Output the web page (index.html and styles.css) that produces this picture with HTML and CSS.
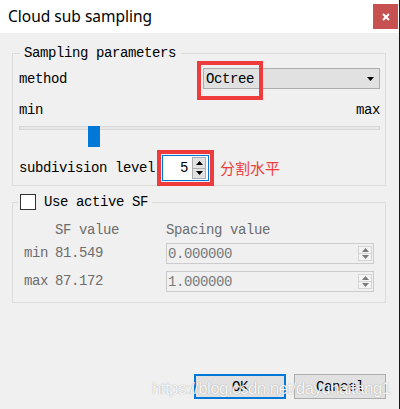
FILE: index.html
```html
<!DOCTYPE html>
<html>
<head>
<meta charset="utf-8">
<link rel="stylesheet" href="styles.css">
</head>
<body>
<div class="dialog">
  <header class="titlebar">
    <span class="title">Cloud sub sampling</span>
    <button class="close" aria-label="Close">
      <svg width="8" height="8" viewBox="0 0 8 8"><path d="M1 1 L7 7 M7 1 L1 7" stroke="#fff" stroke-width="2"/></svg>
    </button>
  </header>
  <main class="content">
    <fieldset class="group g1">
      <legend>Sampling parameters</legend>
      <div class="method-row">
        <span>method</span>
        <div class="combo">
          <span>Octree</span>
          <svg class="arrow" width="7" height="4" viewBox="0 0 7 4"><polygon points="0,0 7,0 3.5,4" fill="#000"/></svg>
          <span class="mark mark-combo"></span>
        </div>
      </div>
      <div class="range"><span>min</span><span>max</span></div>
      <div class="slider">
        <div class="groove"></div>
        <div class="thumb" style="left:69px"></div>
      </div>
      <div class="sub-row">
        <span>subdivision level</span>
        <div class="spin">
          <span class="val">5</span>
          <div class="spin-btns">
            <span><svg width="7" height="4" viewBox="0 0 7 4"><polygon points="0,4 7,4 3.5,0" fill="#000"/></svg></span>
            <span><svg width="7" height="4" viewBox="0 0 7 4"><polygon points="0,0 7,0 3.5,4" fill="#000"/></svg></span>
          </div>
          <span class="mark mark-spin"></span>
        </div>
        <span class="note">分割水平</span>
      </div>
    </fieldset>

    <fieldset class="group g2">
      <legend><span class="check"></span><span>Use active SF</span></legend>
      <div class="sf-grid">
        <span></span>
        <span class="head">SF value</span>
        <span class="head">Spacing value</span>

        <span class="lbl">min</span>
        <span class="lbl">81.549</span>
        <div class="dspin">
          <span>0.000000</span>
          <div class="dspin-btns">
            <span><svg width="7" height="4" viewBox="0 0 7 4"><polygon points="0,4 7,4 3.5,0" fill="#7a7a7a"/></svg></span>
            <span><svg width="7" height="4" viewBox="0 0 7 4"><polygon points="0,0 7,0 3.5,4" fill="#7a7a7a"/></svg></span>
          </div>
        </div>

        <span class="lbl">max</span>
        <span class="lbl">87.172</span>
        <div class="dspin">
          <span>1.000000</span>
          <div class="dspin-btns">
            <span><svg width="7" height="4" viewBox="0 0 7 4"><polygon points="0,4 7,4 3.5,0" fill="#7a7a7a"/></svg></span>
            <span><svg width="7" height="4" viewBox="0 0 7 4"><polygon points="0,0 7,0 3.5,4" fill="#7a7a7a"/></svg></span>
          </div>
        </div>
      </div>
    </fieldset>

    <div class="buttons">
      <button class="btn ok">OK</button>
      <button class="btn">Cancel</button>
    </div>
  </main>
  <div class="watermark">https://blog.csdn.net/dayuhaitang1</div>
</div>
</body>
</html>
```

FILE: styles.css
```css
* { box-sizing: border-box; }

html { background: #0d1a25; }

body {
  margin: 0;
  width: 399px;
  height: 409px;
  overflow: hidden;
  background: #f0f0f0;
}

.dialog {
  position: relative;
  height: 409px;
  font-family: "Liberation Mono", "DejaVu Sans Mono", monospace;
  font-size: 14px;
  letter-spacing: -0.4px;
  line-height: 16px;
  color: #000;
}

.titlebar {
  height: 33px;
  background: #fff;
  display: flex;
  justify-content: space-between;
  align-items: flex-start;
}

.title {
  font-family: "Noto Sans", sans-serif;
  font-size: 15.5px;
  letter-spacing: 0;
  line-height: 22px;
  margin: 5px 0 0 8px;
}

.close {
  width: 25px;
  height: 25px;
  margin: 4px 1px 0 0;
  padding: 0;
  border: 0;
  background: #c75050;
  display: flex;
  align-items: center;
  justify-content: center;
}

.content {
  padding: 12px 13px 0 12px;
}

.group {
  margin: 0;
  min-width: 0;
  border: 1px solid #dcdcdc;
}

.g1 { padding: 6px 5px 4px 6px; }

.g1 legend {
  margin-left: 1px;
  padding: 0 5px 0 4px;
  line-height: 17px;
}

.method-row {
  height: 21px;
  display: flex;
  justify-content: space-between;
  align-items: center;
}

.combo {
  position: relative;
  width: 177px;
  height: 21px;
  border: 1px solid #adadad;
  background: #e1e1e1;
  padding: 0 5px 0 2px;
  display: flex;
  justify-content: space-between;
  align-items: center;
}

.mark {
  position: absolute;
  border: 4px solid #ee3b3b;
}

.mark-combo {
  left: -7px;
  top: -8px;
  width: 66px;
  height: 39px;
}

.range {
  margin-top: 13px;
  display: flex;
  justify-content: space-between;
}

.slider {
  position: relative;
  height: 21px;
  margin-top: 5px;
}

.groove {
  margin-top: 8px;
  height: 4px;
  border: 1px solid #d6d6d6;
  background: #e7e7e7;
}

.thumb {
  position: absolute;
  top: 0;
  width: 12px;
  height: 21px;
  background: #0078d7;
}

.sub-row {
  height: 26px;
  margin-top: 8px;
  display: flex;
  align-items: center;
}

.spin {
  position: relative;
  width: 47px;
  height: 26px;
  margin-left: 7px;
  border: 1px solid #0078d7;
  background: #fff;
  padding: 1px 2px 1px 0;
  display: flex;
  justify-content: flex-end;
  align-items: center;
}

.spin .val { margin-right: 4px; }

.spin-btns {
  width: 14px;
  height: 22px;
  display: flex;
  flex-direction: column;
}

.spin-btns span {
  flex: 1;
  border: 1px solid #adadad;
  background: #e1e1e1;
  display: flex;
  align-items: center;
  justify-content: center;
}

.spin-btns span + span { border-top: 0; }

.mark-spin {
  left: -6px;
  top: -6px;
  width: 57px;
  height: 36px;
}

.note {
  margin-left: 11px;
  font-family: "Noto Sans CJK SC", sans-serif;
  font-size: 15px;
  letter-spacing: 0;
  color: #ee3b3b;
}

.g2 {
  margin-top: 8px;
  padding: 12px 10px 10px 11px;
}

.g2 legend {
  margin-left: -6px;
  padding: 0 4px 0 2px;
  line-height: 16px;
  display: flex;
  align-items: center;
}

.check {
  width: 16px;
  height: 16px;
  margin-right: 8px;
  border: 1px solid #333;
  background: #fff;
}

.sf-grid {
  display: grid;
  grid-template-columns: 31px 111px 208px;
  grid-template-rows: 21px 28px 21px;
  align-items: start;
  color: #6d6d6d;
}

.lbl { line-height: 21px; }

.dspin {
  height: 21px;
  border: 1px solid #cccccc;
  padding: 0 1px 0 1px;
  display: flex;
  justify-content: space-between;
  align-items: center;
  color: #7a7a7a;
}

.dspin-btns {
  width: 14px;
  height: 15px;
  margin-bottom: 1px;
  display: flex;
  flex-direction: column;
}

.dspin-btns span {
  flex: 1;
  border: 1px solid #d4d4d4;
  background: #f4f4f4;
  display: flex;
  align-items: center;
  justify-content: center;
}

.dspin-btns span + span { border-top: 0; }

.buttons {
  margin-top: 71px;
  display: flex;
  justify-content: flex-end;
  gap: 8px;
}

.btn {
  width: 92px;
  height: 25px;
  padding: 0;
  border: 1px solid #adadad;
  background: #e1e1e1;
  font: inherit;
  letter-spacing: inherit;
  line-height: 16px;
  color: #000;
}

.btn.ok { border: 2px solid #0078d7; }

.watermark {
  position: absolute;
  left: 152px;
  top: 381px;
  font-family: "Liberation Sans", Arial, sans-serif;
  font-size: 17px;
  letter-spacing: -0.6px;
  line-height: 16px;
  color: rgba(255, 255, 255, 0.92);
  text-shadow: 0 0 1px rgba(90, 90, 90, 0.6);
  white-space: nowrap;
}
```
